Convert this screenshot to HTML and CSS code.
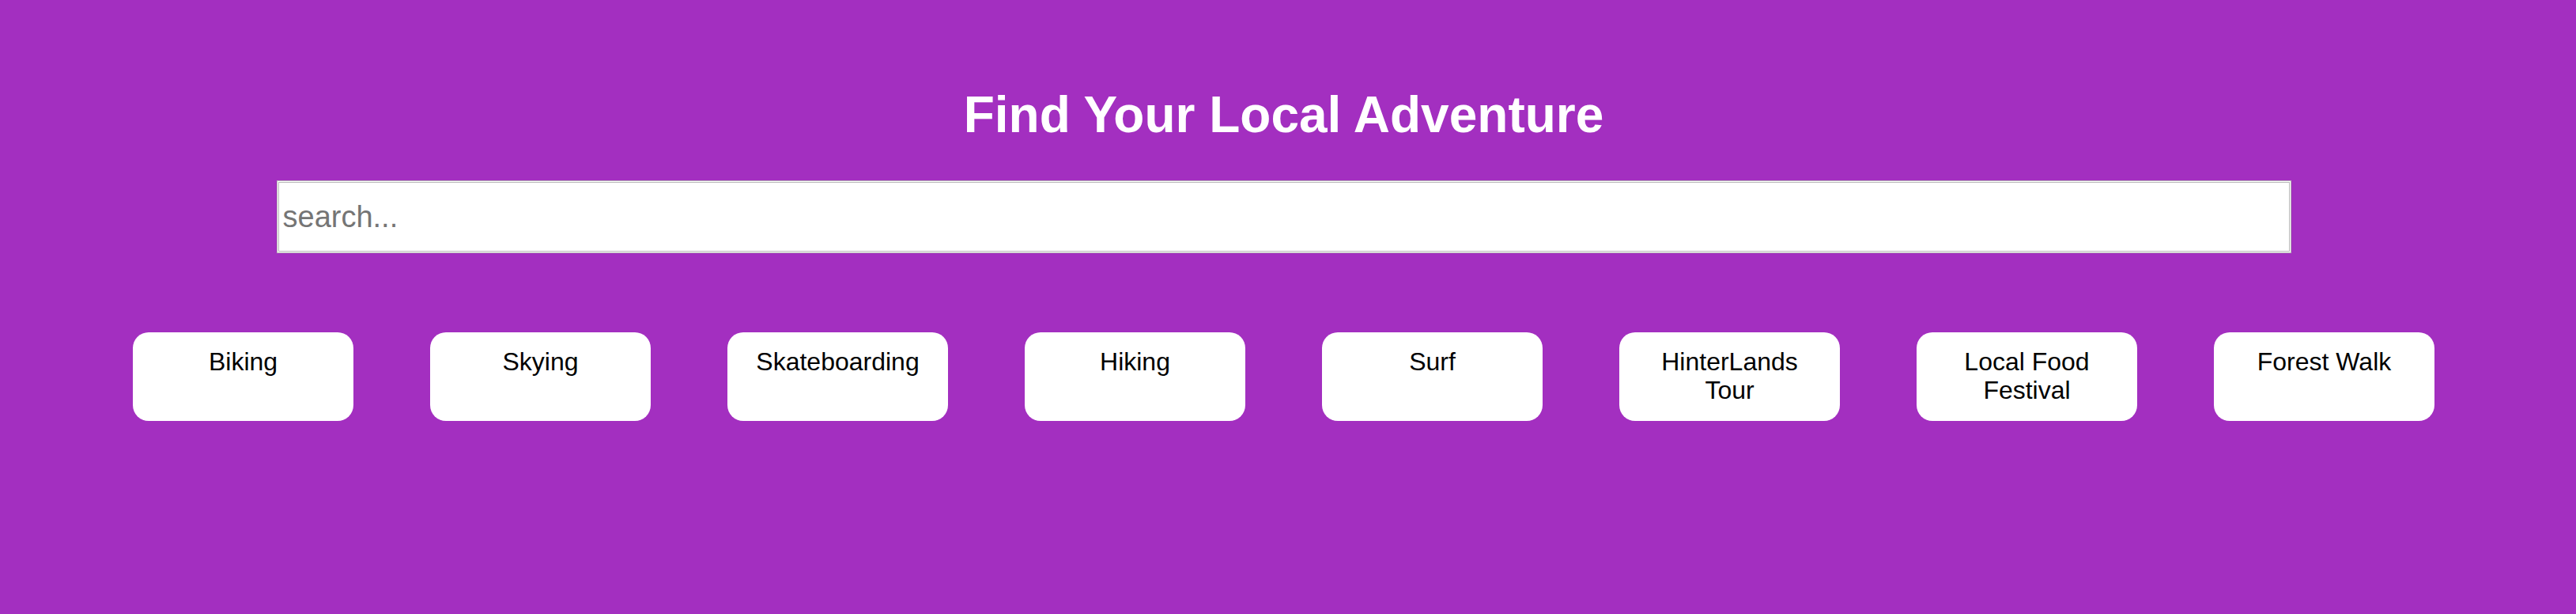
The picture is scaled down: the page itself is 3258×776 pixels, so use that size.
FILE: index.html
```html
<!DOCTYPE html>
<html lang="en">
<head>
<meta charset="utf-8">
<title>Find Your Local Adventure</title>
<link rel="stylesheet" href="styles.css">
</head>
<body>
<main class="page">
  <h1 class="title">Find Your Local Adventure</h1>
  <input class="search" type="text" placeholder="search...">
  <div class="activities">
    <div class="card">Biking</div>
    <div class="card">Skying</div>
    <div class="card">Skateboarding</div>
    <div class="card">Hiking</div>
    <div class="card">Surf</div>
    <div class="card">HinterLands Tour</div>
    <div class="card">Local Food Festival</div>
    <div class="card">Forest Walk</div>
  </div>
</main>
</body>
</html>
```
FILE: styles.css
```css
html, body {
  margin: 0;
  padding: 0;
  background: #a32fc0;
  min-height: 100%;
}
body {
  font-family: "Liberation Sans", Arial, Helvetica, sans-serif;
  min-height: 100vh;
}
.page {
  display: flex;
  flex-direction: column;
  align-items: center;
  padding: 108px 11px 0 0;
}
.title {
  margin: 0;
  font-size: 64px;
  line-height: 74px;
  font-weight: bold;
  color: #ffffff;
}
.search {
  margin-top: 46px;
  width: 2548px;
  height: 92px;
  box-sizing: border-box;
  border: 3px double #b9b9b9;
  background: #ffffff;
  padding: 0 5px;
  font-family: "Liberation Sans", Arial, Helvetica, sans-serif;
  font-size: 38px;
  color: #000;
  outline: none;
}
.search::placeholder {
  color: #757575;
}
.activities {
  margin-top: 100px;
  display: flex;
  gap: 97px;
}
.card {
  width: 279px;
  height: 112px;
  box-sizing: border-box;
  padding: 19px 20px 0;
  background: #ffffff;
  border-radius: 20px;
  text-align: center;
  font-size: 32px;
  line-height: 36px;
  color: #000000;
}
```
